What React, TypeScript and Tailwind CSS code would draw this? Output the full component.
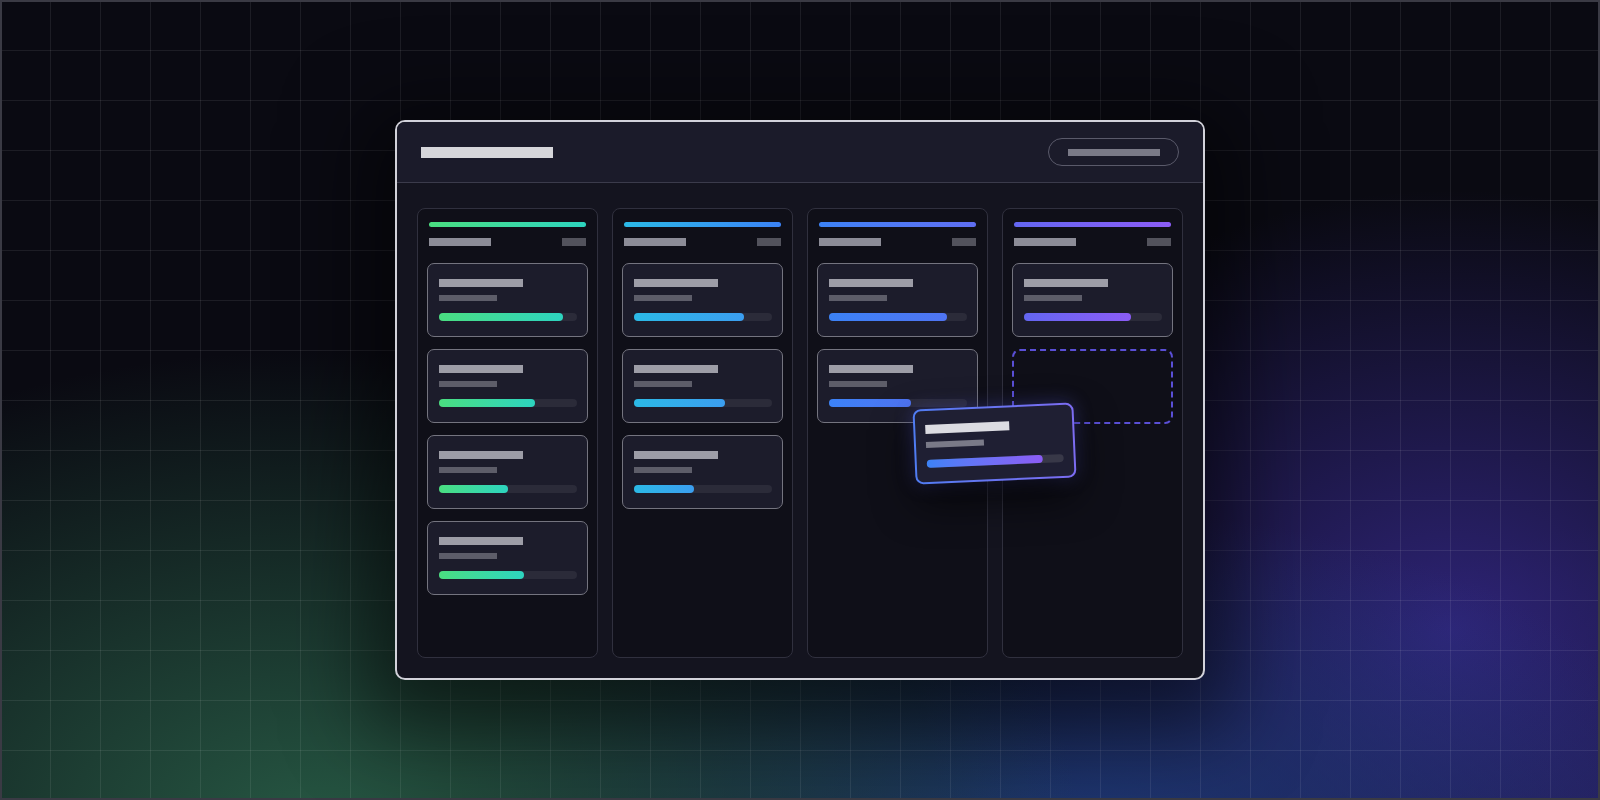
import React from 'react';

type Column = {
  accent: string;
  fill: string;
  cards: number[];
  placeholder?: boolean;
};

const columns: Column[] = [
  { accent: 'from-[#4ade80] to-[#2dd4bf]', fill: 'from-[#4ade80] to-[#2dd4bf]', cards: [90, 70, 50, 62] },
  { accent: 'from-[#2bb9e6] to-[#3b82f6]', fill: 'from-[#2bb9e6] to-[#3b9ef0]', cards: [80, 66, 44] },
  { accent: 'from-[#3b82f6] to-[#5f6ef2]', fill: 'from-[#3b82f6] to-[#4f74f2]', cards: [86, 60] },
  { accent: 'from-[#6366f1] to-[#8b5cf6]', fill: 'from-[#6366f1] to-[#8b5cf6]', cards: [78], placeholder: true },
];

const TaskCard = ({ progress, fill }: { progress: number; fill: string }) => (
  <div className="rounded-[7px] border-[1.5px] border-[#74747f] bg-[#1c1c2b] px-[10.5px] py-[15px]">
    <div className="h-2 w-[84px] bg-[#9d9da7]" />
    <div className="mt-2 h-[6px] w-[58px] bg-[#5d5d69]" />
    <div className="mt-3 h-2 w-full rounded-full bg-[#2b2b39]">
      <div className={`h-full rounded-full bg-gradient-to-r ${fill}`} style={{ width: `${progress}%` }} />
    </div>
  </div>
);

const BoardColumn = ({ column }: { column: Column }) => (
  <div className="flex-1 rounded-lg border border-[#30303e] bg-[#0f0f18] p-[9px]">
    <div className="px-[2px] pt-1">
      <div className={`h-[5px] rounded-full bg-gradient-to-r ${column.accent}`} />
      <div className="mt-[11px] flex items-center justify-between">
        <div className="h-2 w-[62px] bg-[#8c8c97]" />
        <div className="h-2 w-6 bg-[#52525c]" />
      </div>
    </div>
    <div className="mt-[17px] flex flex-col gap-3">
      {column.cards.map((p, i) => (
        <TaskCard key={i} progress={p} fill={column.fill} />
      ))}
      {column.placeholder && (
        <div className="h-[75px] rounded-lg border-2 border-dashed border-[#5a4fd6]" />
      )}
    </div>
  </div>
);

const App = () => {
  return (
    <div className="relative flex h-[800px] w-[1600px] items-center justify-center overflow-hidden bg-[#0a0a12]">
      {/* background glows */}
      <div className="absolute inset-0 bg-[radial-gradient(ellipse_760px_480px_at_320px_830px,rgba(40,92,70,0.95),transparent),radial-gradient(ellipse_640px_340px_at_1080px_850px,rgba(32,62,128,0.9),transparent),radial-gradient(ellipse_540px_440px_at_1450px_630px,rgba(52,40,136,0.85),transparent),radial-gradient(ellipse_360px_300px_at_1650px_820px,rgba(40,34,100,0.6),transparent)]" />
      {/* grid */}
      <div className="absolute inset-0 bg-[linear-gradient(to_right,rgba(255,255,255,0.08)_1px,transparent_1px),linear-gradient(to_bottom,rgba(255,255,255,0.08)_1px,transparent_1px)] bg-[size:50px_50px]" />
      <div className="pointer-events-none absolute inset-0 border-2 border-[#3a3a44]" />

      {/* board window */}
      <div className="relative flex h-[560px] w-[810px] flex-col rounded-[10px] border-2 border-[#d2d2da] bg-[#14141f] shadow-[0_20px_80px_30px_rgba(0,0,0,0.5)]">
        <div className="flex h-[61px] items-center justify-between rounded-t-[8px] border-b border-[#3b3b4b] bg-[#1b1b2a] px-6">
          <div className="h-[11px] w-[132px] bg-[#d6d6da]" />
          <div className="flex h-7 w-[131px] items-center justify-center rounded-full border-[1.5px] border-[#5a5a6a]">
            <div className="h-[7px] w-[92px] bg-[#7a7a87]" />
          </div>
        </div>
        <div className="flex flex-1 gap-[14px] px-5 pb-5 pt-[25px]">
          {columns.map((c, i) => (
            <BoardColumn key={i} column={c} />
          ))}
        </div>

        {/* card being dragged */}
        <div className="absolute left-[517px] top-[284px] w-[161px] -rotate-[2.5deg] rounded-[8px] bg-gradient-to-r from-[#4f7cf2] to-[#7c6cf2] p-[2px] shadow-[0_18px_40px_rgba(0,0,0,0.65),0_0_18px_rgba(99,102,241,0.35)]">
          <div className="rounded-[6px] bg-[#1f1f33] px-[10px] py-[14px]">
            <div className="h-[9px] w-[84px] bg-[#dcdce2]" />
            <div className="mt-2 h-[6px] w-[58px] bg-[#7a7a88]" />
            <div className="mt-3 h-2 w-full rounded-full bg-[#383848]">
              <div className="h-full w-[85%] rounded-full bg-gradient-to-r from-[#3b82f6] to-[#8b5cf6]" />
            </div>
          </div>
        </div>
      </div>
    </div>
  );
};

export default App;
